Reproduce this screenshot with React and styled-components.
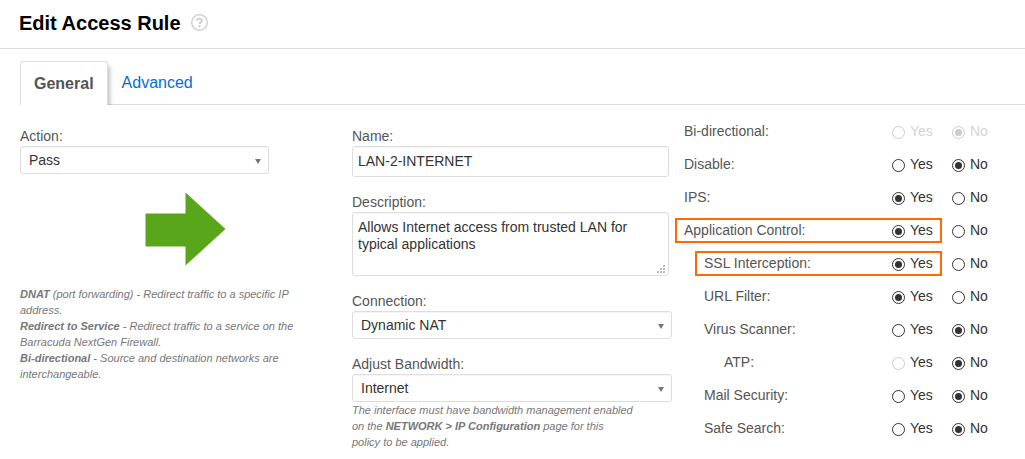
import React, { useState } from 'react'
import styled, { createGlobalStyle, css } from 'styled-components'

const GlobalStyle = createGlobalStyle`
  *, *::before, *::after {
    box-sizing: border-box;
  }
  body {
    margin: 0;
    background: #fff;
    color: #555;
    font-family: "Liberation Sans", Arial, sans-serif;
    font-size: 14px;
    line-height: 20px;
  }
`
const Header = styled.header`
  display: flex;
  align-items: center;
  gap: 10px;
  height: 49px;
  padding: 0 19px 3px;
  border-bottom: 1px solid #ddd;
`
const Title = styled.h1`
  margin: 0;
  color: #000;
  font-size: 20px;
  line-height: 24px;
`
const HelpButton = styled.button`
  width: 17px;
  height: 17px;
  padding: 0;
  border: 0;
  background: none;
  cursor: pointer;
  svg {
    display: block;
  }
`
const Tabs = styled.nav`
  display: flex;
  align-items: stretch;
  height: 56px;
  margin-left: 20px;
  padding-top: 12px;
  overflow: hidden;
  box-shadow: inset 0 -1px #ddd;
`
const Tab = styled.a`
  display: flex;
  align-items: center;
  padding: 0 14px;
  color: #0070d2;
  font-size: 16px;
  text-decoration: none;
  ${({ $active }) =>
    $active &&
    css`
      padding: 0 13px;
      border: 1px solid #ddd;
      border-bottom: 0;
      border-radius: 3px 3px 0 0;
      background: #fff;
      box-shadow: 3px 4px 4px -1px rgba(0, 0, 0, 0.25);
      color: #555;
      font-weight: bold;
    `}
`
const Form = styled.form`
  display: grid;
  grid-template-columns: repeat(3, minmax(0, 1fr));
  padding: 0 9px 0 20px;
`
const Column = styled.div`
  display: flex;
  flex-direction: column;
  gap: 15px;
  padding: 21px 12px 8px 0;
`
const Field = styled.div`
  display: flex;
  flex-direction: column;
`
const control = css`
  width: 100%;
  border: 1px solid #ddd;
  border-radius: 3px;
  background: #fff;
  box-shadow: inset 0 1px 1px rgba(0, 0, 0, 0.04);
  color: #333;
  font-family: inherit;
  font-size: 14px;
`
const TextInput = styled.input`
  ${control}
  max-width: 317px;
  height: 31px;
  padding: 0 5px 2px;
`
const TextAreaWrap = styled.div`
  position: relative;
  max-width: 317px;
  height: 64px;
`
const TextArea = styled.textarea`
  ${control}
  display: block;
  height: 100%;
  padding: 6px 5px;
  line-height: 17px;
  resize: none;
`
const Grip = styled.svg`
  position: absolute;
  right: 4px;
  bottom: 3px;
`
const SelectWrap = styled.div`
  position: relative;
  width: 100%;
  max-width: ${({ $width }) => $width}px;
`
const Select = styled.select`
  ${control}
  display: block;
  height: 28px;
  padding: 0 24px 0 8px;
  appearance: none;
`
const Caret = styled.svg`
  position: absolute;
  top: 13px;
  right: 8px;
  pointer-events: none;
`
const ArrowBox = styled.div`
  display: flex;
  justify-content: flex-end;
  max-width: 249px;
  padding: 3px 43px 5px 0;
`
const Note = styled.p`
  max-width: 282px;
  margin: 0;
  color: #777;
  font-size: 11px;
  font-style: italic;
  line-height: 16px;
`
const Options = styled.div`
  padding-top: 9px;
`
const OptionRow = styled.div`
  position: relative;
  display: grid;
  grid-template-columns: 208px 60px 60px;
  align-items: center;
  height: 33px;
  ${({ $highlight, $level }) =>
    $highlight &&
    css`
      &::after {
        content: '';
        position: absolute;
        top: 5px;
        bottom: 3px;
        left: ${$level * 20 - 9}px;
        width: ${267 - $level * 20}px;
        border: 2px solid #ff6a00;
        pointer-events: none;
      }
    `}
`
const OptionName = styled.span`
  padding-left: ${({ $level }) => $level * 20}px;
`
const Choice = styled.label`
  display: flex;
  align-items: center;
  gap: 5px;
  color: ${({ $faded }) => ($faded ? '#d5d5d5' : '#333')};
`
const Radio = styled.input`
  display: grid;
  place-items: center;
  width: 13px;
  height: 13px;
  margin: 4px 0 0;
  border: 1px solid #333;
  border-radius: 50%;
  background: #fff;
  color: #333;
  appearance: none;
  &:checked::before {
    content: '';
    width: 7px;
    height: 7px;
    border-radius: 50%;
    background: currentColor;
  }
  &:disabled {
    border-color: #ccc;
    color: #ccc;
  }
`

const rules = [
  { id: 'bidirectional', label: 'Bi-directional', level: 0, value: 'No', disabled: ['Yes', 'No'], faded: true },
  { id: 'disable', label: 'Disable', level: 0, value: 'No' },
  { id: 'ips', label: 'IPS', level: 0, value: 'Yes' },
  { id: 'appControl', label: 'Application Control', level: 0, value: 'Yes', highlight: true },
  { id: 'ssl', label: 'SSL Interception', level: 1, value: 'Yes', highlight: true },
  { id: 'urlFilter', label: 'URL Filter', level: 1, value: 'Yes' },
  { id: 'virus', label: 'Virus Scanner', level: 1, value: 'No' },
  { id: 'atp', label: 'ATP', level: 2, value: 'No', disabled: ['Yes'] },
  { id: 'mail', label: 'Mail Security', level: 1, value: 'No' },
  { id: 'safeSearch', label: 'Safe Search', level: 1, value: 'No' },
]

const SelectField = ({ id, label, options, width, children }) => (
  <Field>
    <label htmlFor={id}>{label}:</label>
    <SelectWrap $width={width}>
      <Select id={id}>
        {options.map((o) => (
          <option key={o}>{o}</option>
        ))}
      </Select>
      <Caret width="6" height="5" viewBox="0 0 6 5">
        <path d="M0 0h6L3 5z" fill="#777" />
      </Caret>
    </SelectWrap>
    {children}
  </Field>
)

const RuleOption = ({ rule }) => {
  const [value, setValue] = useState(rule.value)
  return (
    <OptionRow role="radiogroup" aria-labelledby={rule.id} $level={rule.level} $highlight={rule.highlight}>
      <OptionName id={rule.id} $level={rule.level}>
        {rule.label}:
      </OptionName>
      {['Yes', 'No'].map((choice) => (
        <Choice key={choice} $faded={rule.faded}>
          <Radio
            type="radio"
            name={rule.id}
            checked={value === choice}
            disabled={rule.disabled?.includes(choice)}
            onChange={() => setValue(choice)}
          />
          {choice}
        </Choice>
      ))}
    </OptionRow>
  )
}

const App = () => (
  <>
    <GlobalStyle />
    <Header>
      <Title>Edit Access Rule</Title>
      <HelpButton type="button" aria-label="Help">
        <svg width="17" height="17" viewBox="0 0 17 17" fill="none" stroke="#ccc">
          <circle cx="8.5" cy="8.5" r="7.8" strokeWidth="1.3" />
          <path d="M6 6.8C6 5.3 7 4.6 8.5 4.6S11 5.4 11 6.6C11 8 8.6 8.2 8.6 10" strokeWidth="1.8" />
          <path d="M8.6 11v2" strokeWidth="2" />
        </svg>
      </HelpButton>
    </Header>
    <Tabs>
      <Tab href="#general" $active>
        General
      </Tab>
      <Tab href="#advanced">Advanced</Tab>
    </Tabs>
    <Form>
      <Column>
        <SelectField id="action" label="Action" options={['Pass', 'Block', 'DNAT']} width={249} />
        <ArrowBox>
          <svg width="81" height="74" viewBox="0 0 81 74">
            <path d="M0.5 21.5H40.5V0.5L80.5 37L40.5 73.5V54.5H0.5z" fill="#5aa61b" />
          </svg>
        </ArrowBox>
        <div>
          <Note>
            <b>DNAT</b> (port forwarding) - Redirect traffic to a specific IP address.
          </Note>
          <Note>
            <b>Redirect to Service</b> - Redirect traffic to a service on the Barracuda NextGen Firewall.
          </Note>
          <Note>
            <b>Bi-directional</b> - Source and destination networks are interchangeable.
          </Note>
        </div>
      </Column>
      <Column>
        <Field>
          <label htmlFor="name">Name:</label>
          <TextInput id="name" type="text" defaultValue="LAN-2-INTERNET" />
        </Field>
        <Field>
          <label htmlFor="description">Description:</label>
          <TextAreaWrap>
            <TextArea
              id="description"
              defaultValue="Allows Internet access from trusted LAN for typical applications"
            />
            <Grip width="8" height="8" viewBox="0 0 8 8" fill="#bbb">
              <path d="M6 0h2v2H6zM3 3h2v2H3zM6 3h2v2H6zM0 6h2v2H0zM3 6h2v2H3zM6 6h2v2H6z" />
            </Grip>
          </TextAreaWrap>
        </Field>
        <SelectField id="connection" label="Connection" options={['Dynamic NAT', 'Original Source IP']} width={320} />
        <SelectField id="bandwidth" label="Adjust Bandwidth" options={['Internet', 'Business', 'Background']} width={320}>
          <Note>
            The interface must have bandwidth management enabled on the <b>NETWORK &gt; IP Configuration</b> page for
            this policy to be applied.
          </Note>
        </SelectField>
      </Column>
      <Options>
        {rules.map((rule) => (
          <RuleOption key={rule.id} rule={rule} />
        ))}
      </Options>
    </Form>
  </>
)

export default App
